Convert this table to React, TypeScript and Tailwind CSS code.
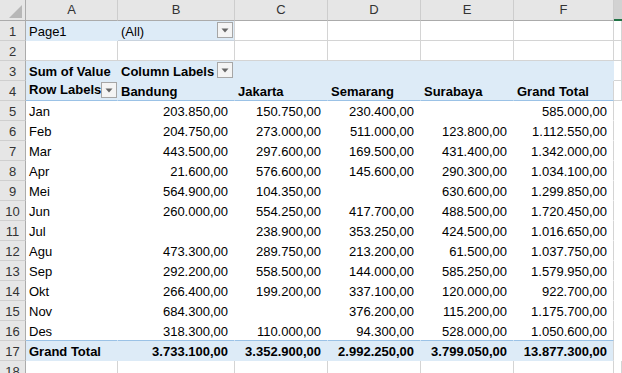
import React from "react";
import clsx from "clsx";

const letters = ["A", "B", "C", "D", "E", "F"];

const cities = ["Bandung", "Jakarta", "Semarang", "Surabaya", "Grand Total"];

const months: [string, string[]][] = [
  ["Jan", ["203.850,00", "150.750,00", "230.400,00", "", "585.000,00"]],
  ["Feb", ["204.750,00", "273.000,00", "511.000,00", "123.800,00", "1.112.550,00"]],
  ["Mar", ["443.500,00", "297.600,00", "169.500,00", "431.400,00", "1.342.000,00"]],
  ["Apr", ["21.600,00", "576.600,00", "145.600,00", "290.300,00", "1.034.100,00"]],
  ["Mei", ["564.900,00", "104.350,00", "", "630.600,00", "1.299.850,00"]],
  ["Jun", ["260.000,00", "554.250,00", "417.700,00", "488.500,00", "1.720.450,00"]],
  ["Jul", ["", "238.900,00", "353.250,00", "424.500,00", "1.016.650,00"]],
  ["Agu", ["473.300,00", "289.750,00", "213.200,00", "61.500,00", "1.037.750,00"]],
  ["Sep", ["292.200,00", "558.500,00", "144.000,00", "585.250,00", "1.579.950,00"]],
  ["Okt", ["266.400,00", "199.200,00", "337.100,00", "120.000,00", "922.700,00"]],
  ["Nov", ["684.300,00", "", "376.200,00", "115.200,00", "1.175.700,00"]],
  ["Des", ["318.300,00", "110.000,00", "94.300,00", "528.000,00", "1.050.600,00"]],
];

const totals = ["3.733.100,00", "3.352.900,00", "2.992.250,00", "3.799.050,00", "13.877.300,00"];

function Cell({ children, className }: { children?: React.ReactNode; className?: string }) {
  return (
    <div
      className={clsx(
        "flex items-end overflow-hidden whitespace-nowrap border-r border-b px-[3px] pb-[2px] leading-none",
        className
      )}
    >
      {children}
    </div>
  );
}

function RowNum({ n }: { n: number }) {
  return (
    <div className="flex items-end justify-center border-r border-b border-r-[#ababab] border-b-[#cfcfcf] bg-[#e6e6e6] pb-[2px] leading-none text-[#333]">
      {n}
    </div>
  );
}

function DropButton() {
  return (
    <span className="ml-auto flex h-[16px] w-[16px] shrink-0 items-center justify-center border border-[#a6a6a6] bg-[#f4f4f4]">
      <svg width="8" height="5" viewBox="0 0 8 5">
        <path d="M0.5 0.5h7L4 4.5z" fill="#666" />
      </svg>
    </span>
  );
}

const grid = "border-[#d4d4d4] bg-white";
const blue = "bg-[#ddebf7] border-r-[#ddebf7] border-b-[#ddebf7]";
const plain = "bg-white border-white";

export default function App() {
  return (
    <div
      className="grid h-[373px] w-[622px] grid-cols-[26px_92px_117px_93px_93px_93px_100px_8px] grid-rows-[21px] auto-rows-[20px] overflow-hidden bg-white text-[13px] text-black"
      style={{ fontFamily: '"Liberation Sans", Arial, sans-serif' }}
    >
      {/* column headers */}
      <div className="relative border-r border-b border-r-[#ababab] border-b-[#ababab] bg-[#e6e6e6]">
        <svg className="absolute right-[3px] bottom-[2px]" width="13" height="13" viewBox="0 0 13 13">
          <path d="M13 0V13H0z" fill="#b7b7b7" />
        </svg>
      </div>
      {letters.map((l) => (
        <div
          key={l}
          className="flex items-center justify-center border-r border-b border-r-[#cdcdcd] border-b-[#ababab] bg-[#e6e6e6] text-[#333]"
        >
          {l}
        </div>
      ))}
      <div className="border-b-2 border-b-[#217346] bg-[#d2d2d2]" />

      {/* 1: report filter */}
      <RowNum n={1} />
      <Cell className={clsx(blue, "border-b-[#c9d3de]")}>Page1</Cell>
      <Cell className="items-center border-r-[#d4d4d4] border-b-[#c9d3de] bg-[#ddebf7] pr-px pb-0">
        <span className="mt-[3px]">(All)</span>
        <DropButton />
      </Cell>
      {[0, 1, 2, 3].map((i) => (
        <Cell key={i} className={grid} />
      ))}
      <Cell className={grid} />

      {/* 2: empty */}
      <RowNum n={2} />
      {[0, 1, 2, 3, 4, 5, 6].map((i) => (
        <Cell key={i} className={grid} />
      ))}

      {/* 3: value / column labels */}
      <RowNum n={3} />
      <Cell className={clsx(blue, "font-bold")}>Sum of Value</Cell>
      <Cell className={clsx(blue, "items-center pr-px pb-0 font-bold")}>
        <span className="mt-[3px]">Column Labels</span>
        <span className="ml-[3px] flex">
          <DropButton />
        </span>
      </Cell>
      <Cell className={blue} />
      <Cell className={blue} />
      <Cell className={blue} />
      <Cell className={clsx(blue, "border-r-[#d4d4d4]")} />
      <Cell className={grid} />

      {/* 4: row labels + cities */}
      <RowNum n={4} />
      <Cell className="items-end border-r-[#ddebf7] border-b-[#9bc2e6] bg-[#ddebf7] pr-[2px] pb-0 font-bold">
        <span className="pb-[2px]">Row Labels</span>
        <DropButton />
      </Cell>
      {cities.map((c, i) => (
        <Cell
          key={c}
          className={clsx(
            "border-b-[#9bc2e6] bg-[#ddebf7] font-bold",
            i === 4 ? "border-r-[#d4d4d4]" : "border-r-[#ddebf7]"
          )}
        >
          {c}
        </Cell>
      ))}
      <Cell className={grid} />

      {/* 5-16: months */}
      {months.map(([m, vals], r) => (
        <React.Fragment key={m}>
          <RowNum n={r + 5} />
          <Cell className={clsx(plain, r === 11 && "border-b-[#9bc2e6]")}>{m}</Cell>
          {vals.map((v, i) => (
            <Cell
              key={i}
              className={clsx(
                plain,
                "justify-end pr-[6px]",
                r === 11 && "border-b-[#9bc2e6]",
                i === 4 && "border-r-[#d4d4d4]"
              )}
            >
              {v}
            </Cell>
          ))}
          <Cell className="border-r-white border-b-white bg-white" />
        </React.Fragment>
      ))}

      {/* 17: grand total */}
      <RowNum n={17} />
      <Cell className={clsx(blue, "font-bold")}>Grand Total</Cell>
      {totals.map((t, i) => (
        <Cell
          key={i}
          className={clsx(
            "justify-end border-b-[#ddebf7] bg-[#ddebf7] pr-[6px] font-bold",
            i === 4 ? "border-r-[#d4d4d4]" : "border-r-[#ddebf7]"
          )}
        >
          {t}
        </Cell>
      ))}
      <Cell className="border-r-white border-b-white bg-white" />

      {/* 18 */}
      <RowNum n={18} />
      {[0, 1, 2, 3, 4, 5, 6].map((i) => (
        <Cell key={i} className={grid} />
      ))}
    </div>
  );
}
